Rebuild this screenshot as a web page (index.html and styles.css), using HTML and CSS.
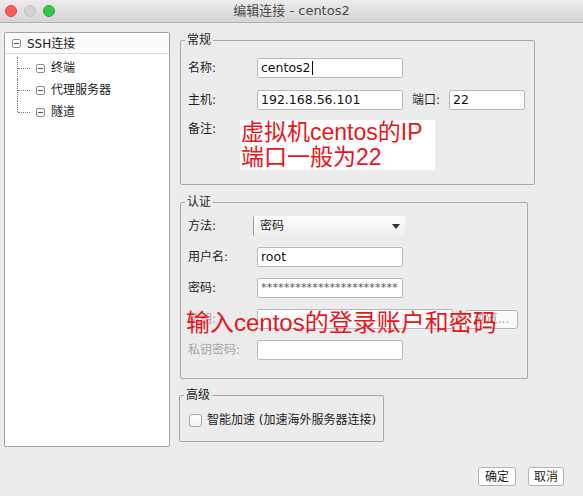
FILE: index.html
```html
<!DOCTYPE html>
<html lang="zh">
<head>
<meta charset="utf-8">
<title>编辑连接 - centos2</title>
<link rel="stylesheet" href="styles.css">
</head>
<body>
<div class="titlebar">
  <div class="lights">
    <span class="light light-red"></span>
    <span class="light light-gray"></span>
    <span class="light light-green"></span>
  </div>
  <div class="title">编辑连接 - centos2</div>
  <div></div>
</div>

<div class="main">
  <div class="tree">
    <div class="tree-root">
      <svg class="expander" width="9" height="9" viewBox="0 0 9 9"><rect x="0.5" y="0.5" width="8" height="8" rx="1.5" fill="#fff" stroke="#8c8c8c"/><line x1="2" y1="4.5" x2="7" y2="4.5" stroke="#555"/></svg>
      <span>SSH连接</span>
    </div>
    <div class="tree-children">
      <div class="tree-child">
        <svg class="expander" width="9" height="9" viewBox="0 0 9 9"><rect x="0.5" y="0.5" width="8" height="8" rx="1.5" fill="#fff" stroke="#8c8c8c"/><line x1="2" y1="4.5" x2="7" y2="4.5" stroke="#555"/></svg>
        <span>终端</span>
      </div>
      <div class="tree-child">
        <svg class="expander" width="9" height="9" viewBox="0 0 9 9"><rect x="0.5" y="0.5" width="8" height="8" rx="1.5" fill="#fff" stroke="#8c8c8c"/><line x1="2" y1="4.5" x2="7" y2="4.5" stroke="#555"/></svg>
        <span>代理服务器</span>
      </div>
      <div class="tree-child">
        <svg class="expander" width="9" height="9" viewBox="0 0 9 9"><rect x="0.5" y="0.5" width="8" height="8" rx="1.5" fill="#fff" stroke="#8c8c8c"/><line x1="2" y1="4.5" x2="7" y2="4.5" stroke="#555"/></svg>
        <span>隧道</span>
      </div>
    </div>
  </div>

  <div class="panels">
    <fieldset class="group group-general">
      <legend>常规</legend>
      <div class="group-body">
        <div class="row">
          <span class="lbl">名称:</span>
          <div class="field w146">centos2<span class="caret"></span></div>
        </div>
        <div class="row">
          <span class="lbl">主机:</span>
          <div class="field w146">192.168.56.101</div>
          <span class="lbl-port">端口:</span>
          <div class="field w76">22</div>
        </div>
        <div class="row row-note">
          <span class="lbl">备注:</span>
        </div>
      </div>
    </fieldset>

    <fieldset class="group group-auth">
      <legend>认证</legend>
      <div class="group-body">
        <div class="row">
          <span class="lbl lbl-select">方法:</span>
          <div class="select">
            <span>密码</span>
            <svg width="8" height="5" viewBox="0 0 8 5"><path d="M0 0H8L4 5Z" fill="#333"/></svg>
          </div>
        </div>
        <div class="row">
          <span class="lbl">用户名:</span>
          <div class="field w146">root</div>
        </div>
        <div class="row">
          <span class="lbl">密码:</span>
          <div class="field w146 pw">************************</div>
        </div>
        <div class="row">
          <span class="lbl lbl-disabled">私钥:</span>
          <div class="field w196"></div>
          <div class="btn btn-browse">浏览...</div>
        </div>
        <div class="row">
          <span class="lbl lbl-disabled">私钥密码:</span>
          <div class="field w146"></div>
        </div>
      </div>
    </fieldset>

    <fieldset class="group group-adv">
      <legend>高级</legend>
      <div class="group-body">
        <div class="check-row">
          <span class="checkbox"></span>
          <span>智能加速 (加速海外服务器连接)</span>
        </div>
      </div>
    </fieldset>
  </div>
</div>

<div class="footer">
  <div class="btn btn-ok">确定</div>
  <div class="btn btn-cancel">取消</div>
</div>

<div class="note note-ip">虚拟机centos的IP<br>端口一般为22</div>
<div class="note note-login">输入centos的登录账户和密码</div>
</body>
</html>
```

FILE: styles.css
```css
* { box-sizing: border-box; }

html, body { margin: 0; padding: 0; }

body {
  width: 583px;
  height: 496px;
  overflow: hidden;
  position: relative;
  background: #ececec;
  color: #1e1e1e;
  font-family: "DejaVu Sans", "Noto Sans CJK SC", sans-serif;
  font-size: 12px;
  line-height: 14px;
}

/* title bar */
.titlebar {
  height: 23px;
  display: grid;
  grid-template-columns: 1fr auto 1fr;
  align-items: center;
  background: linear-gradient(#ececec, #d5d5d5);
  border-bottom: 1px solid #b3b3b3;
}

.lights {
  display: flex;
  gap: 7px;
  padding-left: 5px;
}

.light {
  width: 12px;
  height: 12px;
  border-radius: 50%;
}

.light-red { background: #fc5e57; border: 1px solid #e14842; }
.light-gray { background: #d3d3d3; border: 1px solid #c3c3c3; }
.light-green { background: #33c748; border: 1px solid #27aa35; }

.title {
  font-size: 13px;
  color: #4a4a4a;
}

/* main area */
.main {
  display: grid;
  grid-template-columns: 166px 1fr;
  column-gap: 10px;
  padding: 9px 0 0 4px;
}

.tree {
  height: 415px;
  background: #fff;
  border: 1px solid #a3a3a3;
  border-radius: 2px;
}

.tree-root {
  height: 21px;
  display: flex;
  align-items: center;
  gap: 6px;
  padding-left: 7px;
  padding-top: 1px;
  border-bottom: 1px solid #dcdcdc;
  background: #fbfbfb;
}

.tree-children {
  margin-left: 12px;
  padding-top: 3px;
}

.tree-child {
  position: relative;
  height: 22px;
  display: flex;
  align-items: center;
  gap: 6px;
  padding-left: 19px;
}

.tree-child::before {
  content: "";
  position: absolute;
  left: 0;
  top: 0;
  bottom: 0;
  border-left: 1px dotted #7a7a7a;
}

.tree-child:last-child::before { bottom: 50%; }

.tree-child::after {
  content: "";
  position: absolute;
  left: 1px;
  width: 12px;
  top: 50%;
  border-top: 1px dotted #7a7a7a;
}

/* panels */
.panels {
  display: flex;
  flex-direction: column;
  padding-top: 1px;
}

.group {
  margin: 0;
  padding: 0;
  border: 1px solid #a9a9a9;
  border-radius: 2px;
  min-width: 0;
}

.group legend {
  margin-left: 4px;
  padding: 0 2px;
  font-size: 12px;
  line-height: 14px;
}

.group-body {
  padding-left: 7px;
  display: flex;
  flex-direction: column;
}

.group-general { width: 355px; height: 152px; }
.group-general .group-body { padding-top: 11px; gap: 12px; }
.group-general .row-note { margin-top: -3px; }

.group-auth { width: 348px; height: 184px; margin-top: 10px; }
.group-auth .group-body { padding-top: 7px; gap: 11px; }

.group-adv { width: 205px; height: 54px; margin-top: 9px; margin-left: -1px; }
.group-adv .group-body { padding-top: 11px; padding-left: 9px; }

.row {
  display: flex;
  align-items: center;
  height: 20px;
}

.lbl { width: 69px; flex: none; }
.lbl-select { width: 65px; }
.lbl-disabled { color: #a5a5a5; }
.lbl-port { width: 37px; margin-left: 9px; flex: none; }

.field {
  height: 20px;
  background: #fff;
  border: 1px solid #b9b9b9;
  border-radius: 2px;
  padding: 0 3px;
  font-size: 12.5px;
  line-height: 18px;
  color: #111;
  white-space: nowrap;
  overflow: hidden;
  display: flex;
  align-items: center;
}

.w146 { width: 146px; }
.w76 { width: 76px; }
.w196 { width: 196px; }

.pw {
  font-size: 11px;
  letter-spacing: 0.2px;
  color: #555;
}

.caret {
  display: inline-block;
  width: 1px;
  height: 14px;
  background: #111;
  margin-left: 1px;
}

.select {
  width: 152px;
  height: 20px;
  display: flex;
  align-items: center;
  justify-content: space-between;
  padding: 0 5px 0 6px;
  background: linear-gradient(#fdfdfd, #efefef);
  border-left: 1px solid #9d9d9d;
  border-radius: 2px;
}

.btn {
  height: 19px;
  display: flex;
  align-items: center;
  justify-content: center;
  background: #fff;
  border: 1px solid #b4b4b4;
  border-radius: 3px;
  font-size: 12px;
}

.btn-browse {
  width: 53px;
  margin-left: 12px;
  color: #9a9a9a;
  background: #fafafa;
}

.check-row {
  display: flex;
  align-items: center;
  gap: 5px;
  height: 14px;
}

.checkbox {
  width: 13px;
  height: 13px;
  border: 1px solid #a9a9a9;
  border-radius: 3px;
  background: linear-gradient(#fefefe, #f1f1f1);
}

/* footer buttons */
.footer {
  display: flex;
  justify-content: flex-end;
  gap: 12px;
  padding: 20px 19px 0 0;
}

.btn-ok { width: 38px; }
.btn-cancel { width: 36px; }

/* red annotations laid over the dialog */
.note {
  position: absolute;
  color: #e8161b;
  font-family: "Liberation Sans", "Noto Sans CJK SC", sans-serif;
  white-space: nowrap;
}

.note-ip {
  left: 240px;
  top: 120px;
  width: 195px;
  height: 50px;
  padding-left: 1px;
  background: #fff;
  font-size: 23px;
  line-height: 25px;
}

.note-login {
  left: 186px;
  top: 309px;
  font-size: 24px;
  line-height: 28px;
}
```
